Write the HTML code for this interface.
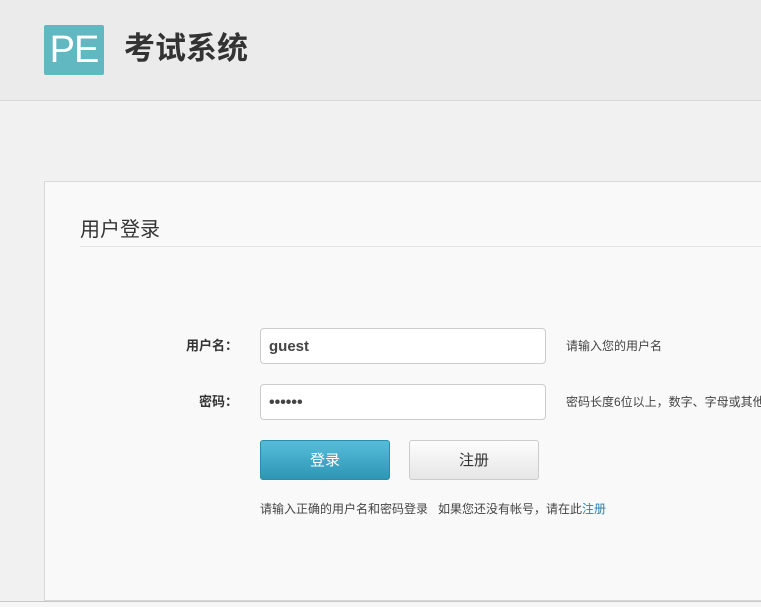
<!DOCTYPE html>
<html><head><meta charset="utf-8"><style>
*{margin:0;padding:0;box-sizing:border-box}
body{width:761px;height:607px;overflow:hidden;background:#f1f1f1;font-family:"Liberation Sans","Noto Sans CJK SC",sans-serif;position:relative}
.hdr{position:absolute;left:0;top:0;width:761px;height:101px;background:#ebebeb;border-bottom:1px solid #d8d8d8}
.logo{position:absolute;left:44px;top:25px;width:60px;height:50px;background:#62b8c1;border-radius:2px;color:#fff;font-size:38px;line-height:50px;text-align:center;letter-spacing:-1px}
.title{position:absolute;left:124px;top:29px;font-size:31px;font-weight:bold;color:#333;line-height:40px}
.panel{position:absolute;left:44px;top:181px;width:730px;height:420px;background:#f9f9f9;border:1px solid #d8d8d8;border-right:none}
.ptitle{position:absolute;left:80px;top:213px;font-size:20px;color:#333}
.line{position:absolute;left:80px;top:246px;width:681px;height:1px;background:#e3e3e3}
.lbl{position:absolute;font-size:13px;font-weight:bold;color:#333;text-align:right;width:80px}
.inp{position:absolute;left:260px;width:286px;height:36px;background:#fff;border:1px solid #ccc;border-radius:4px;font-size:15px;font-weight:bold;color:#444;padding-left:8px;line-height:36px}
.hint{position:absolute;left:566px;font-size:12px;color:#444;white-space:nowrap}
.btn{position:absolute;top:440px;width:130px;height:40px;border-radius:3px;font-size:15px;text-align:center;line-height:40px}
.b1{left:260px;background:linear-gradient(#56bcda,#2e97b5);border:1px solid #2a8eaa;color:#fff}
.b2{left:409px;background:linear-gradient(#fdfdfd,#e6e6e6);border:1px solid #ccc;color:#333}
.foot{position:absolute;left:260px;top:500px;font-size:12px;color:#444;white-space:nowrap}
.foot a{color:#2a7fb0;text-decoration:none}
.bot{position:absolute;left:0;top:601px;width:761px;height:6px;background:#f6f6f6;border-top:1px solid #c8c8c8}
</style></head><body>
<div class="hdr"><div class="logo">PE</div><div class="title">考试系统</div></div>
<div class="panel"></div>
<div class="ptitle">用户登录</div>
<div class="line"></div>
<div class="lbl" style="left:158px;top:335px">用户名：</div>
<div class="inp" style="top:328px">guest</div>
<div class="hint" style="top:337px">请输入您的用户名</div>
<div class="lbl" style="left:158px;top:391px">密码：</div>
<div class="inp" style="top:384px;font-size:16px;letter-spacing:0">••••••</div>
<div class="hint" style="top:393px">密码长度6位以上，数字、字母或其他</div>
<div class="btn b1">登录</div>
<div class="btn b2">注册</div>
<div class="foot">请输入正确的用户名和密码登录 &nbsp;&nbsp;如果您还没有帐号，请在此<a>注册</a></div>
<div class="bot"></div>
</body></html>
